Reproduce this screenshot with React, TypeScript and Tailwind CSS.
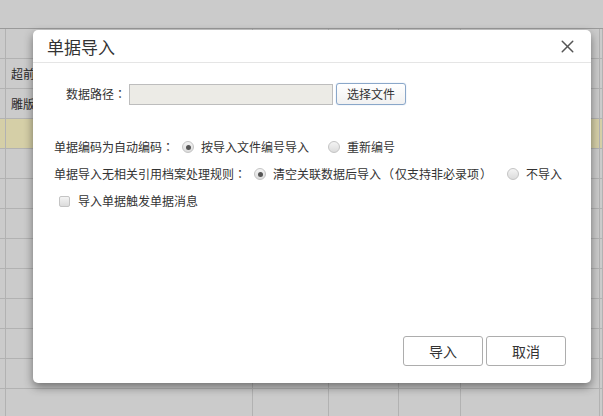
import { X } from "lucide-react";

const font = { fontFamily: '"Noto Sans CJK SC", "Noto Sans", sans-serif' };

// full-width punctuation centred in its cell, as the reference renders it
function P({ children }: { children: string }) {
  return <span style={{ fontFamily: '"Noto Sans CJK TC", sans-serif' }}>{children}</span>;
}

function Radio({ checked }: { checked?: boolean }) {
  return (
    <span className="grid size-[12px] shrink-0 place-content-center rounded-full border border-[#c4c4c4] bg-gradient-to-b from-[#f4f4f4] to-[#dcdcdc]">
      {checked && <span className="block size-[5px] rounded-full bg-[#555]" />}
    </span>
  );
}

function BackgroundTable() {
  const rows = Array.from({ length: 13 }, (_, i) => i);
  const cols = ["w-[6px]", "w-[247px]", "w-[76px]", "w-[70px]", "w-[62px]", "w-[139px]", "flex-1"];
  return (
    <div className="flex h-full w-full flex-col bg-[#cbcbcb]">
      <div className="h-[28px] shrink-0" />
      <div className="flex flex-col border-t border-[#9a9a9a]">
        {rows.map((r) => (
          <div
            key={r}
            className={`flex h-[30px] shrink-0 border-b border-[#b2b2b2] ${r === 3 ? "bg-[#d5cfa7]" : ""}`}
          >
            {cols.map((c, i) => (
              <div
                key={i}
                className={`${c} h-full shrink-0 overflow-hidden border-r border-[#b2b2b2] text-[12px] leading-[29px] text-[#2a2a2a] ${i === 1 ? "pl-[5px]" : ""}`}
              >
                {i === 1 && r === 1 ? "超前" : i === 1 && r === 2 ? "雕版" : ""}
              </div>
            ))}
          </div>
        ))}
      </div>
    </div>
  );
}

export default function App() {
  return (
    <div className="relative h-[416px] w-[603px] overflow-hidden" style={font}>
      <BackgroundTable />
      <div className="absolute top-[30px] left-[33px] flex h-[353px] w-[558px] flex-col rounded-[5px] bg-white shadow-[0_4px_10px_rgba(0,0,0,0.45)]">
        <div className="flex h-[33px] items-center justify-between border-b border-[#e5e5e5] pr-[13px] pl-[14px]">
          <span className="text-[17px] leading-none text-[#333]">单据导入</span>
          <X className="size-[21px] text-[#555]" strokeWidth={1.7} />
        </div>
        <div className="flex flex-1 flex-col px-[21px] text-[12px] text-[#333]">
          <div className="mt-[20px] flex items-center pl-[12px]">
            <span className="w-[63px]">
              数据路径<P>：</P>
            </span>
            <div className="h-[21px] w-[204px] border border-[#bdbdbd] bg-[#ecebe6]" />
            <button className="ml-[3px] h-[22px] w-[70px] rounded-[3px] border border-[#8aa7c9] bg-gradient-to-b from-white to-[#f1f1f1] text-[12px] text-[#333] shadow-[0_0_1px_rgba(90,140,200,0.6)]">
              选择文件
            </button>
          </div>
          <div className="mt-[33px] flex items-center">
            <span className="w-[128px]">
              单据编码为自动编码<P>：</P>
            </span>
            <Radio checked />
            <span className="ml-[7px] w-[127px]">按导入文件编号导入</span>
            <Radio />
            <span className="ml-[7px]">重新编号</span>
          </div>
          <div className="mt-[9px] flex items-center">
            <span className="w-[200px]">
              单据导入无相关引用档案处理规则<P>：</P>
            </span>
            <Radio checked />
            <span className="ml-[7px] w-[234px]">
              清空关联数据后导入<span className="px-[1px]"><P>（</P></span>仅支持非必录项<span className="px-[1px]"><P>）</P></span>
            </span>
            <Radio />
            <span className="ml-[7px]">不导入</span>
          </div>
          <div className="mt-[9px] flex items-center pl-[5px]">
            <span className="size-[11px] rounded-[2px] border border-[#c4c4c4] bg-gradient-to-b from-[#f4f4f4] to-[#dcdcdc]" />
            <span className="ml-[8px]">导入单据触发单据消息</span>
          </div>
          <div className="mt-auto mb-[17px] flex justify-end gap-[3px] pr-[4px]">
            <button className="h-[30px] w-[80px] rounded-[3px] border border-[#adadad] bg-white text-[14px] text-[#333]">
              导入
            </button>
            <button className="h-[30px] w-[80px] rounded-[3px] border border-[#adadad] bg-white text-[14px] text-[#333]">
              取消
            </button>
          </div>
        </div>
      </div>
    </div>
  );
}
